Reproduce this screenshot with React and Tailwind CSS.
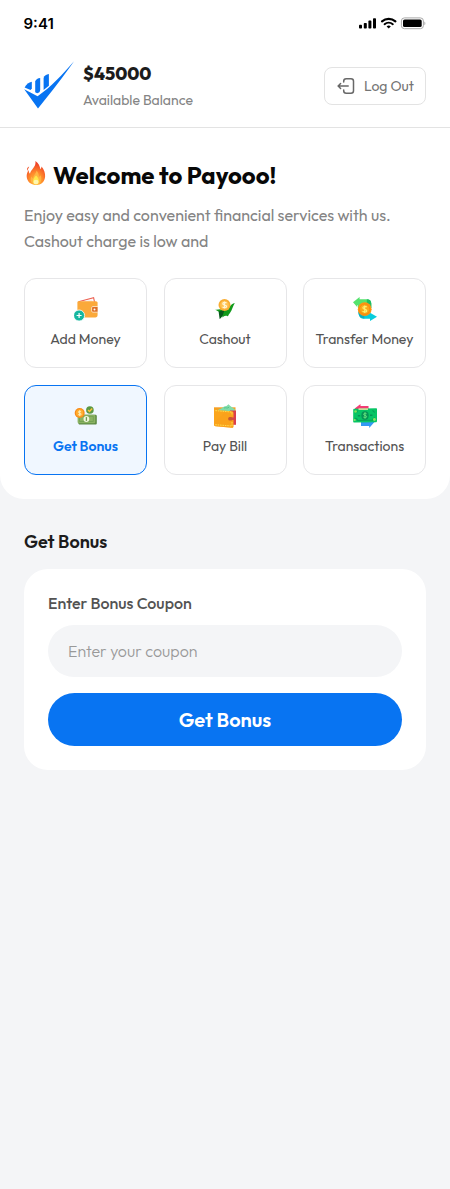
import React from "react";

function StatusIcons() {
  return (
    <svg className="h-[14px] w-[68px]" viewBox="0 0 68 14" fill="none">
      <rect x="1" y="7.8" width="3" height="3.7" rx="0.8" fill="#000" />
      <rect x="5.8" y="6" width="3" height="5.5" rx="0.8" fill="#000" />
      <rect x="10.4" y="3.6" width="3" height="7.9" rx="0.8" fill="#000" />
      <rect x="15" y="1.2" width="3" height="10.3" rx="0.8" fill="#000" />
      <path d="M24 4.3a10.6 10.6 0 0 1 13.4 0" stroke="#000" strokeWidth="2.2" strokeLinecap="round" />
      <path d="M26.6 7.2a6.4 6.4 0 0 1 8.2 0" stroke="#000" strokeWidth="2" strokeLinecap="round" />
      <path d="M28.6 9.4a3.3 3.3 0 0 1 4.2 0l-2.1 2.2z" fill="#000" />
      <rect x="43.4" y="0.9" width="22" height="10.8" rx="3" stroke="#a9a9a9" />
      <rect x="45" y="2.5" width="18.7" height="7.6" rx="1.6" fill="#000" />
      <path d="M66.4 4.6c1.3.3 1.3 3.3 0 3.6z" fill="#a9a9a9" />
    </svg>
  );
}

function Logo() {
  return (
    <svg className="mb-px h-12 w-[50px]" viewBox="0 0 50 48" fill="#0874f2">
      <path d="M50 0.300C40 15 28 30 14 47.500L0.200 28.200L13.600 35.300C27 26 39 13 50 0.300z" />
      <path d="M0.600 26.600C2.700 23.200 4.600 21.200 7.800 20.700V27.500L6.600 29z" />
      <path d="M11.200 20.200c.9-2 2.500-2.900 5-3.200V28.800c0 2-1.200 3.200-3 3.500l-2-1z" />
      <path d="M19.600 16.900c.9-2.200 2.600-3.400 5.300-3.800v11.700L19.600 29z" />
    </svg>
  );
}

function LogoutIcon() {
  return (
    <svg className="h-[18px] w-[18px]" viewBox="0 0 18 18" fill="none" stroke="#686868" strokeWidth="1.5" strokeLinecap="round" strokeLinejoin="round">
      <path d="M6.7 5V4.200C6.700 2.400 7.500 1.700 9.200 1.700H14c1.700 0 2.500.8 2.500 2.500v9.500c0 1.700-.8 2.500-2.500 2.500H9.200c-1.700 0-2.500-.8-2.500-2.500V13M11.200 9H1.200M3.600 6.500L1.100 9l2.500 2.500" />
    </svg>
  );
}

function FireIcon() {
  return (
    <svg className="mb-[5px] h-6 w-6" viewBox="0 0 24 24">
      <defs>
        <radialGradient id="flame" cx="0.5" cy="0.85" r="0.75">
          <stop offset="0" stopColor="#ffc02e" />
          <stop offset="0.5" stopColor="#ff8a2b" />
          <stop offset="1" stopColor="#ef4028" />
        </radialGradient>
      </defs>
      <path d="M11.400 0c3.200 2.200 4.600 4.900 4.900 8.300.8-.7 1.200-1.600 1.300-2.800 2.600 3.200 3.700 6.500 3.500 10-.3 5-3.900 8.500-9.100 8.500S3.100 20.600 2.700 15.800c-.2-2.700.6-4.700 2-6.800 0 1.800.4 3 1.300 3.800C6.600 8.500 12.500 6 11.400 0z" fill="url(#flame)" />
      <path d="M5.200 5.600c-2 1-2.600 2.500-1.900 4.300C3.700 8.300 4.600 7.600 5.200 5.600z" fill="#f2552c" />
      <path d="M12.500 9.500c2 2.600 2.600 4.400 2.300 6.500.8-.3 1.400-.9 1.800-1.800 1.500 3.900.8 9.300-4.500 9.400-5 .1-6.500-4.600-4.600-8 .5 1 .9 1.500 1.700 1.700.1-3.200 2.900-4.400 3.300-7.800z" fill="#ffb443" />
      <path d="M12.100 14.500c3.300 3 4.200 8.500 0 9-4.600-.1-3.700-6 0-9z" fill="#ffe94a" />
      <ellipse cx="12" cy="21" rx="2.500" ry="2.200" fill="#fff6b0" />
    </svg>
  );
}

function AddMoneyIcon() {
  return (
    <svg className="h-6 w-6" viewBox="0 0 24 24">
      <path d="M4.500 4.700L19.600.7l.9 4.200" fill="#fff" stroke="#ec6253" strokeWidth="1.100" />
      <path d="M7 4.700l11-2.300.7 2.500z" fill="#fbeee8" />
      <path d="M3.400 5.500c0-.7.500-1.200 1.200-1.200h17.200c1.100 0 1.800.7 1.800 1.800v12c0 1.600-.8 2.400-2.300 2.400H5.400c-1.300 0-2-.8-2-2z" fill="#fba93a" />
      <path d="M24 9.500h-5.100c-.8 0-1.300.5-1.300 1.300v3.100c0 .8.500 1.300 1.300 1.300H24z" fill="#dc6e26" stroke="#fff1d5" strokeWidth=".8" />
      <circle cx="20.500" cy="12.400" r="1" fill="#fff" />
      <circle cx="5.100" cy="18.500" r="5.500" fill="#15b7a0" stroke="#fff" strokeWidth=".8" />
      <path d="M5.100 16v5M2.600 18.500h5" stroke="#fff" strokeWidth="1.200" />
    </svg>
  );
}

function CashoutIcon() {
  return (
    <svg className="h-6 w-6" viewBox="0 0 24 24">
      <path d="M1.800 12.500c2.500.7 4.700-.8 6.800 0l5 .2c2.400-1 3.700-6 8.200-6.700-2 3-2.500 7-5 10.200-1.500 1.500-1.500 3.400-2.200 3-2.400-1.400-4.100.3-5 1.200C9 17 7.500 15.200 1.800 12.500z" fill="#129b1c" />
      <path d="M5.600 14.500c2.500-.3 4.400-1.500 6-1.400-1.500 3.500-1.800 7.300-5 9z" fill="#075b1b" />
      <circle cx="11.500" cy="8" r="6" fill="#f9ad32" />
      <circle cx="11.500" cy="8" r="4.300" fill="#ffc252" />
      <path d="M13.500 6.200c-1-1.200-3.700-1-3.700.5 0 1.700 3.800 1 3.800 2.800 0 1.500-2.700 1.700-4.100.4M11.500 4.500v7" fill="none" stroke="#fff5d5" strokeWidth="1.200" />
    </svg>
  );
}

function TransferIcon() {
  return (
    <svg className="h-6 w-6" viewBox="0 0 24 24">
      <path d="M0 5.200L6.600 0v2.300h7.200c2.800 0 4.500 1.500 4.500 4.200V11H4.900V8.200H4.200v1.700z" fill="#55e36d" />
      <path d="M13.800 2.300c2.800 0 4.500 1.500 4.500 4.200V11h-4.500V6z" fill="#1dbc67" />
      <path d="M5.400 14.500h12V17l-1.300.2v-2l7.900 4.600-7 4.200v-2.300h-6.400c-3.500 0-5.200-2.600-5.200-7.200z" fill="#09cddc" />
      <path d="M5.400 14.500h5.900v7c-4-.1-5.900-2.800-5.900-7z" fill="#12afbd" />
      <circle cx="11.700" cy="12.200" r="6.900" fill="#ff9411" />
      <circle cx="11.700" cy="12.200" r="5.100" fill="#f9a81a" stroke="#f58208" strokeWidth=".6" />
      <path d="M13.700 10.100c-1.200-1.200-4-.7-3.800.9.200 1.700 3.900.9 3.900 2.700 0 1.700-3 1.700-4.300.4M11.700 8.500v7.400" fill="none" stroke="#fff171" strokeWidth="1.200" />
    </svg>
  );
}

function BonusIcon() {
  return (
    <svg className="h-6 w-6" viewBox="0 0 24 24">
      <path d="M4.300 12.300c0-.9.600-1.500 1.500-1.500h15.500c1 0 1.500.5 1.500 1.500v7c0 .8-.5 1.300-1.300 1.300H5.800c-1 0-1.500-.6-1.500-1.500z" fill="#5e8b44" />
      <rect x="3.600" y="10.700" width="17.700" height="8.500" rx="1.200" fill="#8bb363" />
      <path d="M5.500 12.300h13.800v5.200H5.500z" fill="none" stroke="#709e50" strokeWidth=".8" />
      <circle cx="12.400" cy="15" r="2.900" fill="#f2f6dd" />
      <path d="M12.400 13.100v3.800" stroke="#6c9b4d" strokeWidth="1.300" />
      <circle cx="15.900" cy="6" r="3.800" fill="#5a9844" />
      <path d="M14 6l1.500 1.500 2.700-3" fill="none" stroke="#ffc33b" strokeWidth="1.400" />
      <circle cx="5.700" cy="9" r="5" fill="#f88b17" />
      <circle cx="5.700" cy="9" r="3.700" fill="#ffad2f" />
      <path d="M7.100 7.700c-1-.8-2.800-.5-2.700.4 0 1.300 2.800.7 2.800 2 0 1.100-1.900 1.200-3 .4M5.700 6.300v5.500" fill="none" stroke="#fff3c2" strokeWidth=".9" />
    </svg>
  );
}

function PayBillIcon() {
  return (
    <svg className="h-6 w-6" viewBox="0 0 24 24">
      <path d="M1 3.300h21.500v5H1z" fill="#f5a023" />
      <path d="M5.500 5.500c3.500-.2 4.500-3.500 8-3.500l2-1.800 1.500 1.600 5 3.700-1 2.500-15-.5z" fill="#81dcaa" />
      <path d="M11 4c2-.8 3 .8 5-.7" stroke="#4bbf88" fill="none" strokeWidth=".8" />
      <path d="M17 6.500h6v14.300h-6z" fill="#dc3e4b" />
      <path d="M1 3.300c0 2 1 2.500 2.700 2.700l15 1.200c1.200.1 1.700.7 1.700 1.800v13.500c0 1-.6 1.300-1.500 1.200L2.600 22.200C1.500 22.100 1 21.500 1 20.500z" fill="#fba51c" />
      <path d="M1 18L14 7l5 .4c1 .1 1.400.6 1.400 1.600v13.500c0 1-.6 1.300-1.500 1.200L2.600 22.200C1.500 22.100 1 21.500 1 20.500z" fill="#f9a01b" opacity=".65" />
      <path d="M2.400 6.600l16.600 1.500v3M19 18v4L2.200 20.700" fill="none" stroke="#ffdc4e" strokeWidth="1" strokeDasharray="1.600 .8" />
      <rect x="15.200" y="13" width="4.500" height="3.600" rx="1.500" fill="#c75632" />
      <path d="M19 13.500h2.500v2.400H19z" fill="#d3454d" />
    </svg>
  );
}

function TransactionsIcon() {
  return (
    <svg className="h-6 w-6" viewBox="0 0 24 24">
      <path d="M2 4.200L7.500 0v2h8v4H2z" fill="#f23d74" />
      <path d="M8 18h13.500L16.200 24v-2H8z" fill="#3399f4" />
      <path d="M.2 6.200c0-1 .5-1.400 1.400-1.400L23 4.200c.7 0 1 .3 1 1v11.500c0 1-.5 1.500-1.400 1.500L1.300 18.600c-.8 0-1.100-.4-1.100-1.100z" fill="#07c565" />
      <path d="M5.500 4.400h9.500v1.400H5.500z" fill="#f4e6a5" />
      <path d="M2 8.700c1.500 0 2.400-.8 2.700-2.200M19.700 6.200c.2 1.300.8 2 2.300 2M22 13.800c-1.400.3-2.100 1-2.400 2.300l-14.900.4c-.2-1.500-1-2.100-2.700-2.100" fill="none" stroke="#07a158" strokeWidth="1.100" />
      <ellipse cx="12" cy="11.500" rx="3.700" ry="4.200" fill="#079255" />
      <path d="M13.500 9.700c-1-1-3-.5-2.800.7.200 1.400 2.900.7 2.900 2.200 0 1.300-2 1.500-3.200.5M12 8.500v6" fill="none" stroke="#67e87f" strokeWidth="1" />
      <path d="M4.800 11.700h2.400M17 11.300h2.400" stroke="#079255" strokeWidth="1.500" />
      <circle cx="2.600" cy="7.500" r="1.300" fill="#7fe65a" />
      <circle cx="21.400" cy="15.500" r="1.400" fill="#8ce661" />
      <circle cx="1.700" cy="16" r="1.100" fill="#8ce661" />
    </svg>
  );
}

const actions = [
  { label: "Add Money", Icon: AddMoneyIcon },
  { label: "Cashout", Icon: CashoutIcon },
  { label: "Transfer Money", Icon: TransferIcon },
  { label: "Get Bonus", Icon: BonusIcon, active: true },
  { label: "Pay Bill", Icon: PayBillIcon },
  { label: "Transactions", Icon: TransactionsIcon },
];

function ActionCard({ label, Icon, active }) {
  return (
    <button
      className={`flex h-[90px] flex-col items-center rounded-xl border pt-[18px] text-sm leading-[18px] whitespace-nowrap ${
        active
          ? "border-[#0874f2] bg-[#f0f7ff] font-semibold text-[#0874f2]"
          : "border-[#e6e6e8] bg-white text-[#535353]"
      }`}
    >
      <Icon />
      <span className="mt-[9px]">{label}</span>
    </button>
  );
}

export default function App() {
  return (
    <div className="min-h-[1189px] w-[450px] bg-[#f4f5f7] font-['Outfit','Lato',sans-serif]">
      <div className="h-[498.5px] rounded-b-3xl bg-white">
        <div className="flex h-[46px] items-center justify-between pt-px pr-6 pl-[23.5px]">
          <span className="pt-px font-['Inter',sans-serif] text-[15px] font-semibold text-black">9:41</span>
          <StatusIcons />
        </div>

        <header className="flex h-[82px] items-center justify-between border-b border-[#e3e3e3] px-6 pb-0.5">
          <div className="flex items-center gap-[9px]">
            <Logo />
            <div className="flex flex-col gap-[5px]">
              <span className="text-[18px] leading-[23px] font-extrabold text-[#1c1c1c]">$45000</span>
              <span className="text-sm leading-[20px] text-[#848484]">Available Balance</span>
            </div>
          </div>
          <button className="flex h-[38px] w-[102px] items-center gap-[9px] rounded-lg border border-[#e3e3e3] pl-3 text-sm whitespace-nowrap text-[#757575]">
            <LogoutIcon />
            <span>Log Out</span>
          </button>
        </header>

        <section className="px-6 pt-8">
          <div className="flex h-[30px] items-center gap-[5px]">
            <FireIcon />
            <h1 className="text-[24px] leading-[30px] font-bold text-[#080808]">Welcome to Payooo!</h1>
          </div>
          <p className="mt-3 text-base leading-[26px] text-[#848484]">
            <span className="block whitespace-nowrap">Enjoy easy and convenient financial services with us.</span>
            <span className="block whitespace-nowrap">Cashout charge is low and</span>
          </p>
          <div className="mt-6 grid grid-cols-3 gap-x-[16.5px] gap-y-[16.5px]">
            {actions.map((a) => (
              <ActionCard key={a.label} {...a} />
            ))}
          </div>
        </section>
      </div>

      <main className="px-6 pt-[31.5px]">
        <h2 className="text-[18px] leading-[23px] font-semibold text-[#1c1c1c]">Get Bonus</h2>
        <form className="mt-4 flex h-[201px] flex-col rounded-3xl bg-white px-6 pt-6" onSubmit={(e) => e.preventDefault()}>
          <label htmlFor="coupon" className="text-base leading-5 font-medium text-[#535353]">Enter Bonus Coupon</label>
          <input
            id="coupon"
            placeholder="Enter your coupon"
            className="mt-3 h-[52px] rounded-full bg-[#f4f5f7] px-5 text-base font-light outline-none placeholder:text-[#999]"
          />
          <button className="mt-4 h-[53px] rounded-full bg-[#0874f2] text-[20px] font-semibold text-white">Get Bonus</button>
        </form>
      </main>
    </div>
  );
}
